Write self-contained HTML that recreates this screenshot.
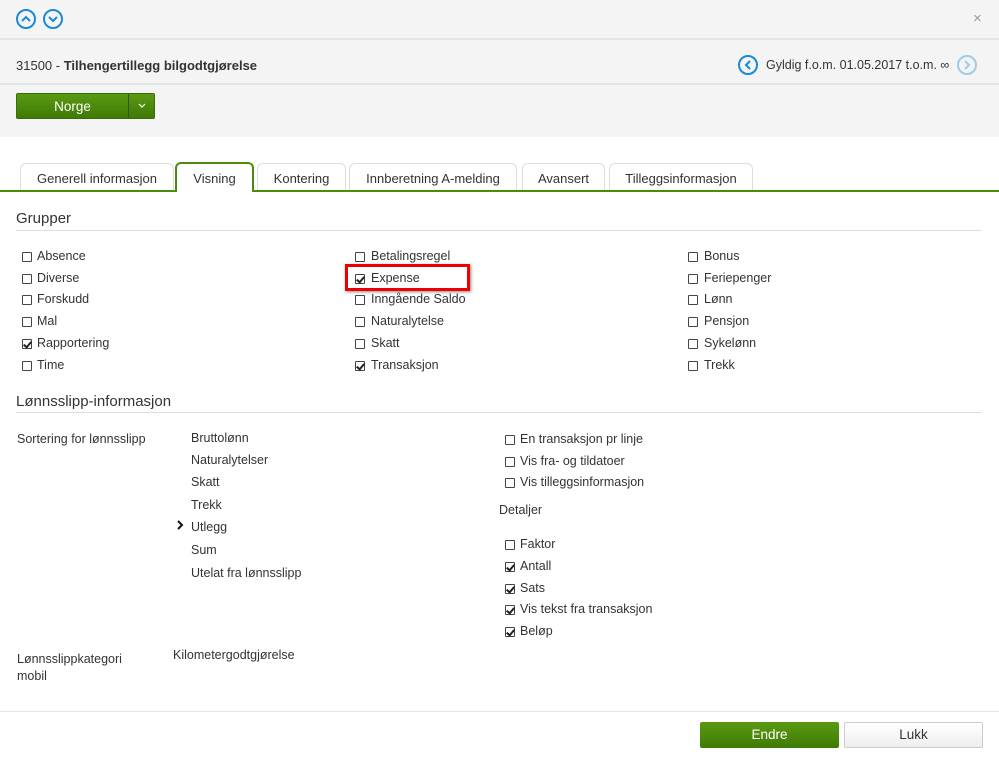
<!DOCTYPE html>
<html><head><meta charset="utf-8"><style>
*{margin:0;padding:0;box-sizing:border-box}
body{width:999px;height:763px;position:relative;background:#fff;font-family:"Liberation Sans",sans-serif;font-size:12.5px;color:#333;overflow:hidden}
.a{position:absolute;white-space:nowrap}
.t{margin-top:1px}
.cb{position:absolute;width:10px;height:10px;border:1px solid #444;border-radius:1px;background:#fff;margin-top:1px}
.cb.c::after{content:"";position:absolute;left:2px;top:0px;width:3px;height:6px;border:solid #222;border-width:0 2px 2px 0;transform:rotate(40deg)}
.tab{position:absolute;top:163px;height:28px;border:1px solid #ddd;border-bottom:none;border-radius:6px 6px 0 0;background:#fff;text-align:center;line-height:29px;font-size:13px}
.hr{position:absolute;left:16px;right:17px;height:1px;background:#ddd}
</style></head><body>
<div class="a" style="left:0;top:0;width:999px;height:137px;background:#f4f4f4"></div>
<div class="a" style="left:0;top:38px;width:999px;height:2px;background:#e4e4e4"></div>
<div class="a" style="left:0;top:83px;width:999px;height:2px;background:#e4e4e4"></div>
<svg class="a" style="left:15px;top:8px" width="50" height="22"><circle cx="11" cy="11" r="9" fill="none" stroke="#1a8ad6" stroke-width="2"/><path d="M7 13l4-4 4 4" fill="none" stroke="#1a8ad6" stroke-width="2"/><circle cx="38" cy="11" r="9" fill="none" stroke="#1a8ad6" stroke-width="2"/><path d="M34 9l4 4 4-4" fill="none" stroke="#1a8ad6" stroke-width="2"/></svg>
<div class="a" style="left:973px;top:10px;color:#999;font-size:15px">×</div>
<div class="a" style="left:16px;top:58px;font-size:13px">31500 - <b>Tilhengertillegg bilgodtgjørelse</b></div>
<svg class="a" style="left:737px;top:54px" width="22" height="22"><circle cx="11" cy="11" r="9" fill="none" stroke="#1a8ad6" stroke-width="2"/><path d="M13 7l-4 4 4 4" fill="none" stroke="#1a8ad6" stroke-width="2"/></svg>
<div class="a" style="left:766px;top:58px;font-size:12.5px">Gyldig f.o.m. 01.05.2017 t.o.m. ∞</div>
<svg class="a" style="left:956px;top:54px" width="22" height="22"><circle cx="11" cy="11" r="9" fill="none" stroke="#9ccbeb" stroke-width="2"/><path d="M9 7l4 4-4 4" fill="none" stroke="#9ccbeb" stroke-width="2"/></svg>
<div class="a" style="left:16px;top:93px;width:139px;height:26px;background:linear-gradient(#5a9a12,#3f7a05);border-radius:2px;border:1px solid #3a6d05"></div>
<div class="a" style="left:128px;top:94px;width:1px;height:24px;background:#2f5a04"></div>
<div class="a" style="left:16px;top:99px;width:113px;text-align:center;color:#fff;font-size:13.5px">Norge</div>
<svg class="a" style="left:137px;top:102px" width="10" height="8"><path d="M2 2l3 3 3-3" fill="none" stroke="#fff" stroke-width="1.2"/></svg>
<div class="tab" style="left:20px;width:154px">Generell informasjon</div>
<div class="tab" style="left:175px;width:79px;border:2px solid #4a8c0d;border-bottom:none;top:162px;height:30px;z-index:2">Visning</div>
<div class="tab" style="left:257px;width:89px">Kontering</div>
<div class="tab" style="left:349px;width:168px">Innberetning A-melding</div>
<div class="tab" style="left:522px;width:83px">Avansert</div>
<div class="tab" style="left:609px;width:144px">Tilleggsinformasjon</div>
<div class="a" style="left:0;top:190px;width:999px;height:2px;background:#4a8c0d;z-index:1"></div>
<div class="a" style="left:16px;top:210px;font-size:15px">Grupper</div>
<div class="hr" style="top:230px"></div>
<div class="cb" style="left:22px;top:251px"></div><div class="a t" style="left:37px;top:248px">Absence</div>
<div class="cb" style="left:22px;top:273px"></div><div class="a t" style="left:37px;top:270px">Diverse</div>
<div class="cb" style="left:22px;top:294px"></div><div class="a t" style="left:37px;top:291px">Forskudd</div>
<div class="cb" style="left:22px;top:316px"></div><div class="a t" style="left:37px;top:313px">Mal</div>
<div class="cb c" style="left:22px;top:338px"></div><div class="a t" style="left:37px;top:335px">Rapportering</div>
<div class="cb" style="left:22px;top:360px"></div><div class="a t" style="left:37px;top:357px">Time</div>
<div class="cb" style="left:355px;top:251px"></div><div class="a t" style="left:371px;top:248px">Betalingsregel</div>
<div class="cb c" style="left:355px;top:273px"></div><div class="a t" style="left:371px;top:270px">Expense</div>
<div class="a" style="left:345px;top:264px;width:125px;height:27px;border:3px solid #e00;box-shadow:1px 1px 3px #888"></div>
<div class="cb" style="left:355px;top:294px"></div><div class="a t" style="left:371px;top:291px">Inngående Saldo</div>
<div class="cb" style="left:355px;top:316px"></div><div class="a t" style="left:371px;top:313px">Naturalytelse</div>
<div class="cb" style="left:355px;top:338px"></div><div class="a t" style="left:371px;top:335px">Skatt</div>
<div class="cb c" style="left:355px;top:360px"></div><div class="a t" style="left:371px;top:357px">Transaksjon</div>
<div class="cb" style="left:688px;top:251px"></div><div class="a t" style="left:704px;top:248px">Bonus</div>
<div class="cb" style="left:688px;top:273px"></div><div class="a t" style="left:704px;top:270px">Feriepenger</div>
<div class="cb" style="left:688px;top:294px"></div><div class="a t" style="left:704px;top:291px">Lønn</div>
<div class="cb" style="left:688px;top:316px"></div><div class="a t" style="left:704px;top:313px">Pensjon</div>
<div class="cb" style="left:688px;top:338px"></div><div class="a t" style="left:704px;top:335px">Sykelønn</div>
<div class="cb" style="left:688px;top:360px"></div><div class="a t" style="left:704px;top:357px">Trekk</div>
<div class="a" style="left:16px;top:393px;font-size:15px">Lønnsslipp-informasjon</div>
<div class="hr" style="top:412px"></div>
<div class="a t" style="left:17px;top:431px">Sortering for lønnsslipp</div>
<div class="a t" style="left:191px;top:430px">Bruttolønn</div>
<div class="a t" style="left:191px;top:452px">Naturalytelser</div>
<div class="a t" style="left:191px;top:474px">Skatt</div>
<div class="a t" style="left:191px;top:497px">Trekk</div>
<svg class="a" style="left:176px;top:520px" width="8" height="10"><path d="M2 1l4 4-4 4" fill="none" stroke="#111" stroke-width="2"/></svg>
<div class="a t" style="left:191px;top:519px">Utlegg</div>
<div class="a t" style="left:191px;top:542px">Sum</div>
<div class="a t" style="left:191px;top:565px">Utelat fra lønnsslipp</div>
<div class="cb" style="left:505px;top:434px"></div><div class="a t" style="left:520px;top:431px">En transaksjon pr linje</div>
<div class="cb" style="left:505px;top:456px"></div><div class="a t" style="left:520px;top:453px">Vis fra- og tildatoer</div>
<div class="cb" style="left:505px;top:477px"></div><div class="a t" style="left:520px;top:474px">Vis tilleggsinformasjon</div>
<div class="a t" style="left:499px;top:502px">Detaljer</div>
<div class="cb" style="left:505px;top:539px"></div><div class="a t" style="left:520px;top:536px">Faktor</div>
<div class="cb c" style="left:505px;top:561px"></div><div class="a t" style="left:520px;top:558px">Antall</div>
<div class="cb c" style="left:505px;top:583px"></div><div class="a t" style="left:520px;top:580px">Sats</div>
<div class="cb c" style="left:505px;top:604px"></div><div class="a t" style="left:520px;top:601px">Vis tekst fra transaksjon</div>
<div class="cb c" style="left:505px;top:626px"></div><div class="a t" style="left:520px;top:623px">Beløp</div>
<div class="a t" style="left:17px;top:651px">Lønnsslippkategori</div>
<div class="a t" style="left:17px;top:668px">mobil</div>
<div class="a t" style="left:173px;top:647px">Kilometergodtgjørelse</div>
<div class="a" style="left:0;top:711px;width:999px;height:1px;background:#e4e4e4"></div>
<div class="a" style="left:700px;top:722px;width:139px;height:26px;background:linear-gradient(#5a9a12,#3f7a05);border-radius:2px;color:#fff;text-align:center;line-height:26px;font-size:13.5px">Endre</div>
<div class="a" style="left:844px;top:722px;width:139px;height:26px;background:linear-gradient(#fff,#eee);border:1px solid #ccc;border-radius:2px;text-align:center;line-height:24px;font-size:13.5px">Lukk</div>
</body></html>
